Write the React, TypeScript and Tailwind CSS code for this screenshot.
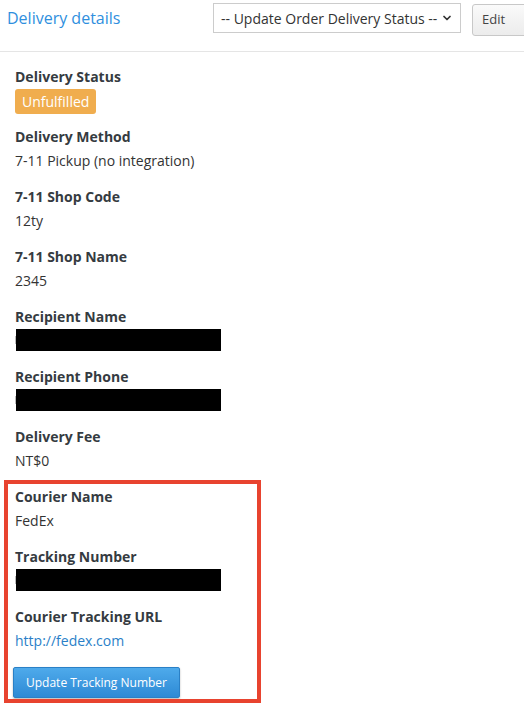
import { ChevronDown } from 'lucide-react';

type Field = {
  label: string;
  value?: string;
  kind?: 'badge' | 'redacted' | 'link';
};

const fields: Field[] = [
  { label: 'Delivery Status', value: 'Unfulfilled', kind: 'badge' },
  { label: 'Delivery Method', value: '7-11 Pickup (no integration)' },
  { label: '7-11 Shop Code', value: '12ty' },
  { label: '7-11 Shop Name', value: '2345' },
  { label: 'Recipient Name', kind: 'redacted' },
  { label: 'Recipient Phone', kind: 'redacted' },
  { label: 'Delivery Fee', value: 'NT$0' },
];

const courierFields: Field[] = [
  { label: 'Courier Name', value: 'FedEx' },
  { label: 'Tracking Number', kind: 'redacted' },
  { label: 'Courier Tracking URL', value: 'http://fedex.com', kind: 'link' },
];

function FieldRow({ field }: { field: Field }) {
  return (
    <div className="h-[60px]">
      <div className="text-[14px] leading-[20px] font-bold text-[#353b41]">{field.label}</div>
      {field.kind === 'badge' ? (
        <span className="mt-[2px] inline-flex h-[25px] items-center rounded-[3px] bg-[#f0ad4e] px-[7px] text-[14px] text-white">
          {field.value}
        </span>
      ) : field.kind === 'redacted' ? (
        <div className="mt-[2px] flex items-center">
          <span className="h-[8px] w-[1px] bg-[#bbb]" />
          <div className="h-[22px] w-[205px] bg-black" />
        </div>
      ) : field.kind === 'link' ? (
        <a className="mt-[4px] block text-[14px] leading-[20px] text-[#2a7fc8]">{field.value}</a>
      ) : (
        <div className="mt-[4px] text-[14px] leading-[20px] text-[#333]">{field.value}</div>
      )}
    </div>
  );
}

export default function App() {
  return (
    <div className="h-[712px] w-[524px] overflow-hidden bg-white font-['Open_Sans',sans-serif]">
      <div className="flex h-[52px] items-start border-b border-[#e5e5e5]">
        <h2 className="flex-1 pl-[7px] pt-[7px] text-[16px] leading-[22px] text-[#2f8fde]">Delivery details</h2>
        <div className="mt-[3px] flex h-[30px] w-[248px] shrink-0 items-center justify-between border border-[#ccc] bg-white pl-[7px] pr-[7px] text-[14px] whitespace-nowrap text-[#333]">
          <span>-- Update Order Delivery Status --</span>
          <ChevronDown className="h-[12px] w-[12px]" strokeWidth={3.5} />
        </div>
        <button className="-mr-[12px] ml-[11px] mt-[4px] h-[32px] w-[64px] shrink-0 rounded-l-[3px] border border-[#c8c8c8] bg-gradient-to-b from-[#fafafa] to-[#ececec] pl-[9px] text-left text-[13px] text-[#444]">
          Edit
        </button>
      </div>

      <div className="pl-[15px] pt-[15px]">
        {fields.map((f) => (
          <FieldRow key={f.label} field={f} />
        ))}

        <div className="relative">
          {courierFields.map((f) => (
            <FieldRow key={f.label} field={f} />
          ))}
          <button className="-ml-[2px] h-[31px] w-[167px] rounded-[2px] border border-[#2a80c6] bg-gradient-to-b from-[#4eaaeb] to-[#2d8ad5] text-[12px] text-white shadow-[0_1px_2px_rgba(0,0,0,0.3)]">
            Update Tracking Number
          </button>
          <div className="pointer-events-none absolute -left-[11px] -top-[7px] h-[223px] w-[257px] border-[4px] border-[#e8432f]" />
        </div>
      </div>
    </div>
  );
}
